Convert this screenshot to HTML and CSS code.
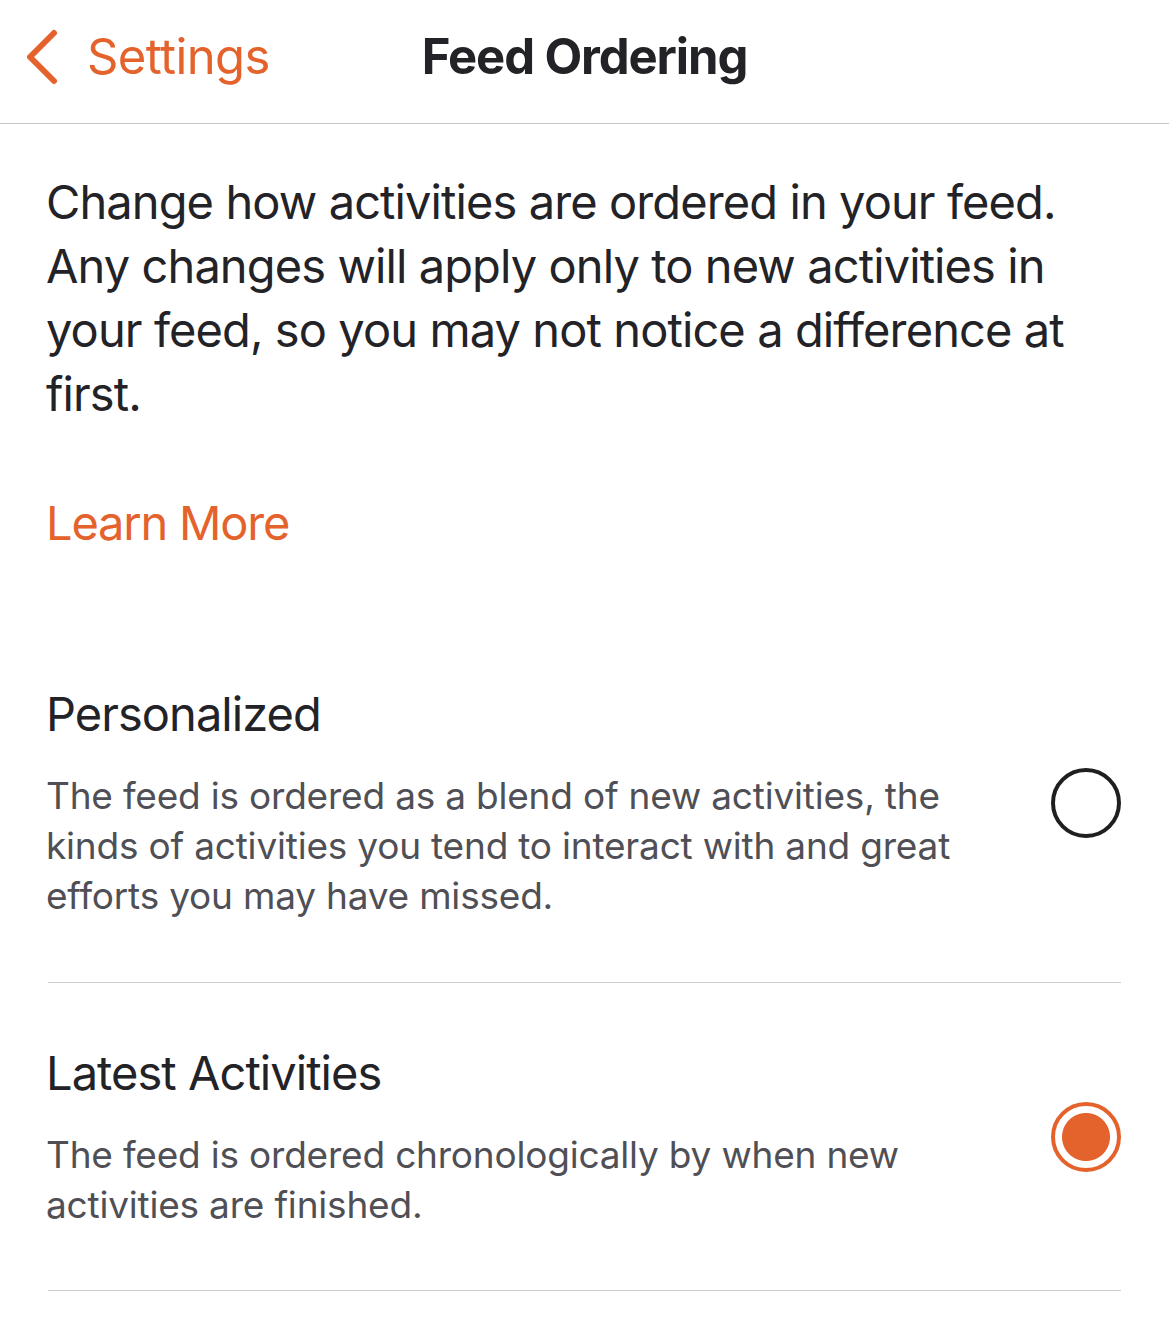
FILE: index.html
```html
<!DOCTYPE html>
<html lang="en">
<head>
<meta charset="utf-8">
<title>Feed Ordering</title>
<link rel="stylesheet" href="styles.css">
</head>
<body>
<header class="navbar">
  <a class="back" href="#">
    <svg class="chevron" width="34" height="60" viewBox="0 0 34 60" aria-hidden="true">
      <polyline points="28,6 4,30 28,54" fill="none" stroke="#E4622B" stroke-width="6" stroke-linecap="round" stroke-linejoin="round"/>
    </svg>
    <span class="back-label">Settings</span>
  </a>
  <h1 class="title">Feed Ordering</h1>
  <div class="spacer"></div>
</header>
<main class="content">
  <p class="intro">Change how activities are ordered in your feed. Any changes will apply only to new activities in your feed, so you may not notice a difference at first.</p>
  <a class="learn" href="#">Learn More</a>
  <div class="options">
    <div class="option">
      <div class="option-text">
        <div class="option-title">Personalized</div>
        <div class="option-desc">The feed is ordered as a blend of new activities, the kinds of activities you tend to interact with and great efforts you may have missed.</div>
      </div>
      <span class="radio"></span>
    </div>
    <div class="option">
      <div class="option-text">
        <div class="option-title">Latest Activities</div>
        <div class="option-desc">The feed is ordered chronologically by when new activities are finished.</div>
      </div>
      <span class="radio selected"></span>
    </div>
  </div>
</main>
</body>
</html>
```

FILE: styles.css
```css
* { box-sizing: border-box; }
html, body { margin: 0; padding: 0; background: #fff; }
body {
  font-family: Inter, "Noto Sans", "Liberation Sans", sans-serif;
  color: #242428;
  width: 1169px;
}
.navbar {
  height: 124px;
  border-bottom: 1px solid #c6c6c8;
  display: grid;
  grid-template-columns: 1fr auto 1fr;
  align-items: center;
  padding-bottom: 10px;
}
.back {
  display: flex;
  align-items: center;
  gap: 27px;
  padding-left: 26px;
  text-decoration: none;
  color: #E4622B;
}
.chevron { display: block; }
.back-label {
  font-size: 49px;
  line-height: 58px;
  letter-spacing: -0.6px;
}
.title {
  margin: 0;
  font-size: 49px;
  line-height: 58px;
  font-weight: 700;
  color: #232327;
  letter-spacing: -1.1px;
}
.content {
  padding: 46px 48px 0 48px;
}
.intro {
  margin: 0 0 0 -2px;
  font-size: 47px;
  line-height: 64px;
  color: #232327;
  letter-spacing: -0.9px;
}
.learn {
  display: block;
  margin: 65px 0 0 -2px;
  font-size: 47px;
  line-height: 64px;
  color: #E4622B;
  text-decoration: none;
  width: max-content;
  letter-spacing: -1.2px;
}
.options {
  margin-top: 70px;
}
.option {
  display: flex;
  align-items: center;
  justify-content: space-between;
  gap: 40px;
  padding: 61px 0 60px 0;
  border-bottom: 1px solid #cfcfd1;
}
.option:first-child {
  padding-top: 60px;
  padding-bottom: 61px;
}
.option-text {
  flex: 1;
  max-width: 960px;
  margin-left: -2px;
}
.option-title {
  font-size: 47px;
  line-height: 58px;
  color: #232327;
  letter-spacing: -0.95px;
}
.option-desc {
  margin-top: 28px;
  font-size: 37px;
  line-height: 50px;
  color: #4f4f55;
  letter-spacing: -0.2px;
}
.radio {
  flex: none;
  width: 70px;
  height: 70px;
  border-radius: 50%;
  border: 4px solid #1f1f22;
  background: #fff;
}
.radio.selected {
  border-color: #E4622B;
  background: radial-gradient(circle, #E4622B 0 23.5px, #fff 24.5px);
}
```
